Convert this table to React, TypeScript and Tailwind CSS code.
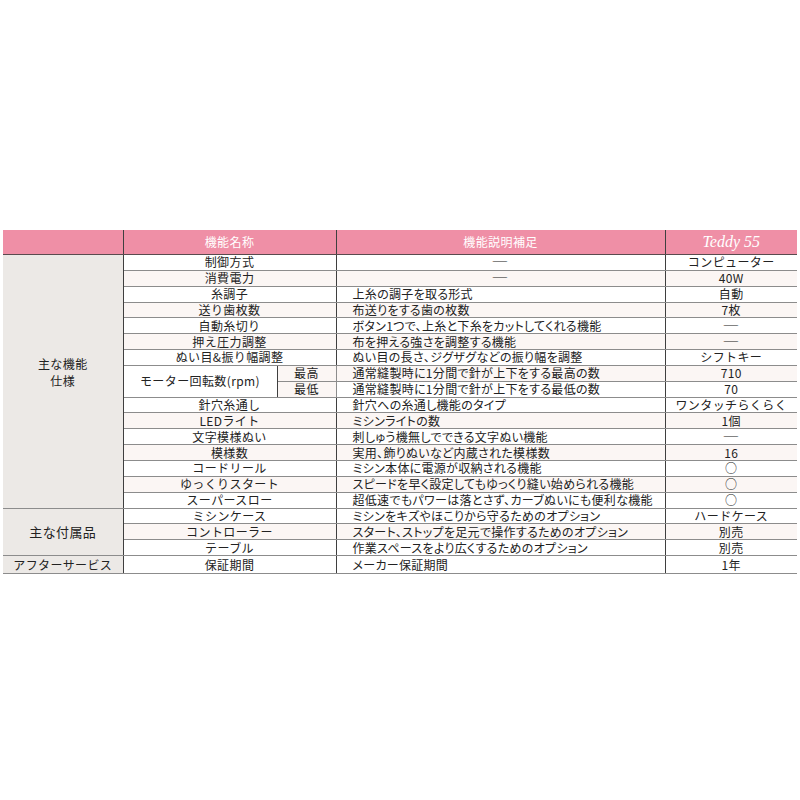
import React from "react"

type Row = {
  name: string
  desc: string
  value: string
  center?: boolean
}

const features: Row[] = [
  { name: "制御方式", desc: "―", value: "コンピューター", center: true },
  { name: "消費電力", desc: "―", value: "40W", center: true },
  { name: "糸調子", desc: "上糸の調子を取る形式", value: "自動" },
  { name: "送り歯枚数", desc: "布送りをする歯の枚数", value: "7枚" },
  { name: "自動糸切り", desc: "ボタン1つで、上糸と下糸をカットしてくれる機能", value: "―" },
  { name: "押え圧力調整", desc: "布を押える強さを調整する機能", value: "―" },
  { name: "ぬい目&振り幅調整", desc: "ぬい目の長さ、ジグザグなどの振り幅を調整", value: "シフトキー" }
]

const features2: Row[] = [
  { name: "針穴糸通し", desc: "針穴への糸通し機能のタイプ", value: "ワンタッチらくらく" },
  { name: "LEDライト", desc: "ミシンライトの数", value: "1個" },
  { name: "文字模様ぬい", desc: "刺しゅう機無しでできる文字ぬい機能", value: "―" },
  { name: "模様数", desc: "実用、飾りぬいなど内蔵された模様数", value: "16" },
  { name: "コードリール", desc: "ミシン本体に電源が収納される機能", value: "○" },
  { name: "ゆっくりスタート", desc: "スピードを早く設定してもゆっくり縫い始められる機能", value: "○" },
  { name: "スーパースロー", desc: "超低速でもパワーは落とさず、カーブぬいにも便利な機能", value: "○" }
]

const accessories: Row[] = [
  { name: "ミシンケース", desc: "ミシンをキズやほこりから守るためのオプション", value: "ハードケース" },
  { name: "コントローラー", desc: "スタート、ストップを足元で操作するためのオプション", value: "別売" },
  { name: "テーブル", desc: "作業スペースをより広くするためのオプション", value: "別売" }
]

const cell = "h-[15.85px] whitespace-nowrap border-b border-[#8c8c8c] p-0 leading-none"
const vline = "border-r border-r-[#3f3f3f]"
const desc = "pl-[16px] text-left tracking-[0.3px] [font-feature-settings:'palt']"

// wide dash, as in the printed table
function Text({ value }: { value: string }) {
  if (value === "―") return <span className="inline-block scale-x-[1.4]">―</span>
  return <>{value}</>
}

function Cells({ row, shade }: { row: Row; shade: boolean }) {
  const bg = shade ? "bg-[#fbf6f4]" : "bg-white"
  return (
    <>
      <td colSpan={2} className={`${cell} ${vline} ${bg} text-center`}>
        {row.name}
      </td>
      <td className={`${cell} ${vline} ${bg} ${row.center ? "text-center" : desc}`}>
        <Text value={row.desc} />
      </td>
      <td className={`${cell} ${bg} text-center`}>
        <Text value={row.value} />
      </td>
    </>
  )
}

const groupCell =
  "whitespace-nowrap border-b border-[#8c8c8c] bg-[#ece9e6] text-center align-middle leading-[17px] p-0"

export default function App() {
  return (
    <div className="h-[800px] w-[800px] bg-white pt-[230px] pl-[3px]">
      <table
        className="w-[794px] table-fixed border-collapse text-[12px] tracking-[0.4px] text-[#222]"
        style={{ fontFamily: '"Noto Sans CJK JP", "Noto Sans", sans-serif' }}
      >
        <colgroup>
          <col className="w-[120px]" />
          <col className="w-[154px]" />
          <col className="w-[59px]" />
          <col className="w-[329px]" />
          <col className="w-[132px]" />
        </colgroup>
        <thead>
          <tr className="h-[22px] bg-[#ef8fa6] text-white">
            <th className={`border-b border-b-[#5a4a4e] p-0 font-normal ${vline}`}></th>
            <th colSpan={2} className={`border-b border-b-[#5a4a4e] p-0 font-normal ${vline}`}>
              機能名称
            </th>
            <th className={`border-b border-b-[#5a4a4e] p-0 font-normal ${vline}`}>機能説明補足</th>
            <th
              className="border-b border-b-[#5a4a4e] p-0 text-[16px] font-normal italic tracking-normal"
              style={{ fontFamily: '"Liberation Serif", serif' }}
            >
              Teddy 55
            </th>
          </tr>
        </thead>
        <tbody>
          {features.map((row, i) => (
            <tr key={row.name}>
              {i === 0 && (
                <td rowSpan={16} className={`${groupCell} ${vline} pb-[18px]`}>
                  主な機能
                  <br />
                  仕様
                </td>
              )}
              <Cells row={row} shade={i % 2 === 1} />
            </tr>
          ))}

          {/* motor speed: split cell */}
          <tr>
            <td rowSpan={2} className={`${cell} ${vline} bg-white text-center`}>
              モーター回転数(rpm)
            </td>
            <td className={`${cell} border-r border-r-[#8c8c8c] bg-[#fbf6f4] text-center`}>最高</td>
            <td className={`${cell} ${vline} bg-[#fbf6f4] ${desc}`}>
              通常縫製時に1分間で針が上下をする最高の数
            </td>
            <td className={`${cell} bg-[#fbf6f4] text-center`}>710</td>
          </tr>
          <tr>
            <td className={`${cell} border-r border-r-[#8c8c8c] bg-[#fbf6f4] text-center`}>最低</td>
            <td className={`${cell} ${vline} bg-white ${desc}`}>
              通常縫製時に1分間で針が上下をする最低の数
            </td>
            <td className={`${cell} bg-white text-center`}>70</td>
          </tr>

          {features2.map((row, i) => (
            <tr key={row.name}>
              <Cells row={row} shade={i % 2 === 1} />
            </tr>
          ))}

          {accessories.map((row, i) => (
            <tr key={row.name}>
              {i === 0 && (
                <td rowSpan={3} className={`${groupCell} ${vline} text-[13px]`}>
                  主な付属品
                </td>
              )}
              <Cells row={row} shade={i % 2 === 1} />
            </tr>
          ))}

          <tr>
            <td className={`${groupCell} ${vline} h-[15.85px]`}>アフターサービス</td>
            <Cells row={{ name: "保証期間", desc: "メーカー保証期間", value: "1年" }} shade={false} />
          </tr>
        </tbody>
      </table>
    </div>
  )
}
